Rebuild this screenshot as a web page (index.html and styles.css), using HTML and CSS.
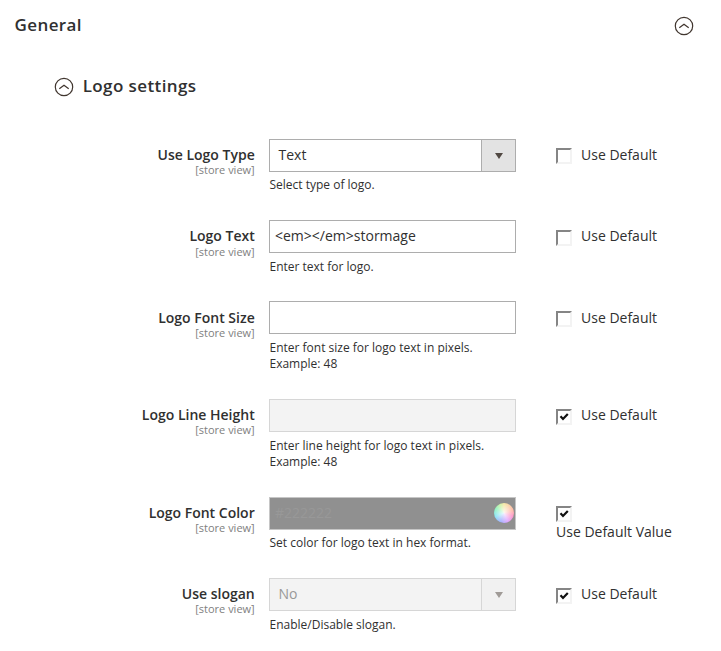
FILE: index.html
```html
<!DOCTYPE html>
<html lang="en">
<head>
<meta charset="utf-8">
<title>General</title>
<link rel="stylesheet" href="styles.css">
</head>
<body>
<svg class="defs" aria-hidden="true">
  <symbol id="collapse" viewBox="0 0 20 20"><circle cx="10" cy="10" r="8.7"/><path d="M5.3 11.8 10 8.2l4.7 3.6"/></symbol>
  <symbol id="check" viewBox="0 0 16 16"><path d="M4.5 7.3 7 10l4.8-5"/></symbol>
</svg>
<header class="section-head">
  <h1>General</h1>
  <svg class="collapse"><use href="#collapse"/></svg>
</header>
<div class="group-head">
  <svg class="collapse"><use href="#collapse"/></svg>
  <h2>Logo settings</h2>
</div>
<main class="fields">
  <div class="row">
    <div class="label"><b>Use Logo Type</b><small>[store view]</small></div>
    <div class="value"><div class="control select"><span>Text</span><i class="arrow"></i></div><p>Select type of logo.</p></div>
    <div class="default"><span class="box"></span><span>Use Default</span></div>
  </div>
  <div class="row">
    <div class="label"><b>Logo Text</b><small>[store view]</small></div>
    <div class="value"><div class="control">&lt;em&gt;&lt;/em&gt;stormage</div><p>Enter text for logo.</p></div>
    <div class="default"><span class="box"></span><span>Use Default</span></div>
  </div>
  <div class="row tall">
    <div class="label"><b>Logo Font Size</b><small>[store view]</small></div>
    <div class="value"><div class="control"></div><p>Enter font size for logo text in pixels.<br>Example: 48</p></div>
    <div class="default"><span class="box"></span><span>Use Default</span></div>
  </div>
  <div class="row tall">
    <div class="label"><b>Logo Line Height</b><small>[store view]</small></div>
    <div class="value"><div class="control disabled"></div><p>Enter line height for logo text in pixels.<br>Example: 48</p></div>
    <div class="default"><span class="box"><svg><use href="#check"/></svg></span><span>Use Default</span></div>
  </div>
  <div class="row">
    <div class="label"><b>Logo Font Color</b><small>[store view]</small></div>
    <div class="value"><div class="control color"><span>#222222</span><i class="wheel"></i></div><p>Set color for logo text in hex format.</p></div>
    <div class="default stacked"><span class="box"><svg><use href="#check"/></svg></span><span>Use Default Value</span></div>
  </div>
  <div class="row">
    <div class="label"><b>Use slogan</b><small>[store view]</small></div>
    <div class="value"><div class="control select disabled"><span>No</span><i class="arrow"></i></div><p>Enable/Disable slogan.</p></div>
    <div class="default"><span class="box"><svg><use href="#check"/></svg></span><span>Use Default</span></div>
  </div>
</main>
</body>
</html>
```

FILE: styles.css
```css
* { box-sizing: border-box; }
body {
  margin: 0;
  height: 651px;
  overflow: hidden;
  background: #fff;
  color: #303030;
  font: 14px/19px "Open Sans", sans-serif;
}
.defs { display: none; }
h1, h2 {
  margin: 0;
  font-size: 17px;
  line-height: 24px;
  font-weight: 600;
  letter-spacing: 0.4px;
}
.section-head {
  display: flex;
  justify-content: space-between;
  padding: 13px 27.5px 0 14.5px;
  height: 61px;
}
.section-head .collapse { margin-top: 3px; }
.group-head {
  display: flex;
  gap: 9px;
  padding: 13px 0 0 53.7px;
  height: 78px;
}
.group-head .collapse { margin-top: 3px; }
.collapse {
  width: 20px;
  height: 20px;
  fill: none;
  stroke: #41362f;
  stroke-width: 1.2;
}
.row {
  display: grid;
  grid-template-columns: 255px 247px 1fr;
  column-gap: 14px;
  height: 81.2px;
}
.row:first-child { height: 81.3px; }
.row:nth-child(2) { height: 81.1px; }
.row.tall { height: 97.8px; }
.label {
  display: flex;
  flex-direction: column;
  align-items: flex-end;
  padding: 7.15px 0.3px 0 0;
}
.label b { font-weight: 600; line-height: 18.1px; }
.label small { font-size: 11px; line-height: 12px; color: #808080; }
.control {
  display: flex;
  align-items: center;
  height: 33px;
  padding: 0 5px 2px;
  border: 1px solid #adadad;
}
.select { padding: 0 0 0 8.5px; justify-content: space-between; }
.select span { padding-bottom: 2px; }
.arrow {
  display: grid;
  place-items: center;
  width: 34px;
  height: 31px;
  border-left: 1px solid #adadad;
  background: #e3e3e3;
}
.arrow::after {
  content: "";
  margin-top: 1px;
  border: 4px solid transparent;
  border-top: 6px solid #514943;
  border-bottom: 0;
}
.disabled { background: #f3f3f3; border-color: #d6d6d6; color: #989898; }
.disabled .arrow { background: #f1f1f1; border-color: #d6d6d6; }
.disabled .arrow::after { border-top-color: #a09b97; }
.color {
  justify-content: space-between;
  padding: 0 1px 1px 5px;
  border-color: #c6c6c6;
  background: #909090;
  color: #989898;
}
.wheel {
  width: 20px;
  height: 20px;
  border-radius: 50%;
  background:
    radial-gradient(circle, #fffc 5%, #fff0 75%),
    conic-gradient(#f5e5a0, #ffb5a0 70deg, #ff8fc5 110deg, #dca0ff 155deg, #9da9ff 200deg, #83e4f3 250deg, #8df1b8 300deg, #c9f2a0 335deg, #f5e5a0);
}
.value p { margin: 5.4px 0 0 0.5px; font-size: 12px; line-height: 16px; white-space: nowrap; }
.default {
  display: flex;
  gap: 9px;
  padding: 6.15px 0 0 26px;
}
.box {
  width: 16px;
  height: 16px;
  margin-top: 3.32px;
  border: 2px solid;
  border-color: #858585 #f3f3f3 #f3f3f3 #858585;
}
.box svg {
  display: block;
  width: 16px;
  height: 16px;
  margin: -2px;
  fill: none;
  stroke: #111;
  stroke-width: 2.2;
}
.stacked { flex-direction: column; gap: 0; }
.stacked .box { margin-top: 3px; }
.stacked span:last-child { margin-top: 0; }
```
